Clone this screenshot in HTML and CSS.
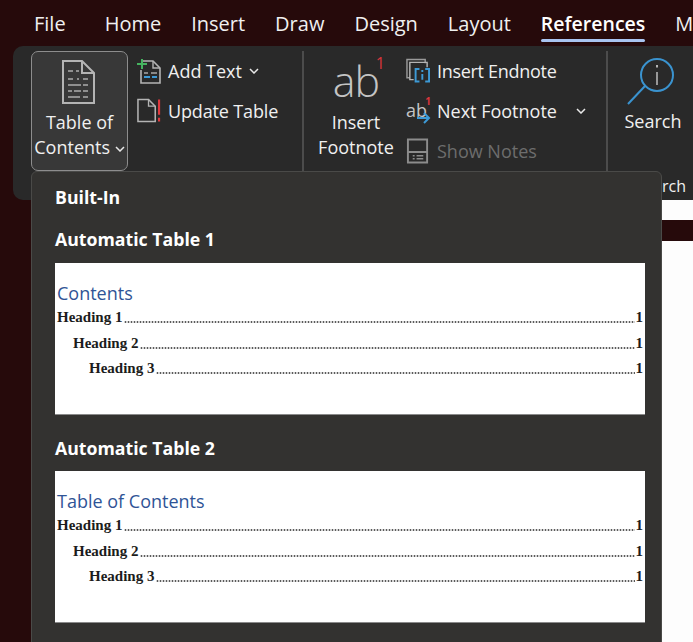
FILE: index.html
```html
<!DOCTYPE html>
<html lang="en">
<head>
  <meta charset="UTF-8">
  <meta name="viewport" content="width=device-width, initial-scale=1.0">
  <title>References ribbon</title>
  <link rel="stylesheet" href="styles.css">
</head>
<body>
  <nav class="tabs">
    <span class="tab tab-file">File</span>
    <span class="tab">Home</span>
    <span class="tab">Insert</span>
    <span class="tab">Draw</span>
    <span class="tab">Design</span>
    <span class="tab">Layout</span>
    <span class="tab tab-active">References</span>
    <span class="tab">M</span>
  </nav>

  <section class="ribbon">
    <div class="group group-toc">
      <button class="big-btn toc-btn">
        <svg class="toc-icon" width="34" height="46" viewBox="0 0 34 46" fill="none" stroke="#b4b4b4" stroke-width="2">
          <path d="M2 2H21L33 14V44H2Z"/>
          <path d="M21 2V14H33"/>
          <path d="M7 12h5M15 12h3M7 20h5M16 20h2M22 20h5M7 26h13M22 26h5M7 32h4M13 32h7M22 32h5M7 38h12M22 38h5" stroke-width="1.8" stroke="#8f8f8f"/>
        </svg>
        <span class="big-label">Table of<br>Contents <svg class="chev" width="10" height="6" viewBox="0 0 10 6" fill="none" stroke="#e8e8e8" stroke-width="1.5"><path d="M1 1l4 4 4-4"/></svg></span>
      </button>
      <div class="small-col">
        <div class="small-row">
          <svg class="small-icon" width="24" height="26" viewBox="0 0 24 26" fill="none">
            <path d="M6 3H16L23 10V25H4V12" stroke="#b4b4b4" stroke-width="1.6"/>
            <path d="M16 3V10H23" stroke="#b4b4b4" stroke-width="1.4"/>
            <path d="M5 1V11M0 6H10" stroke="#45b35f" stroke-width="2"/>
            <path d="M7 15h4M14 15h6" stroke="#a8a8a8" stroke-width="1.6"/>
            <path d="M7 19h6M15 19h5" stroke="#3d9ad6" stroke-width="2"/>
          </svg>
          <span>Add Text</span>
          <svg class="chev" width="10" height="6" viewBox="0 0 10 6" fill="none" stroke="#e8e8e8" stroke-width="1.5"><path d="M1 1l4 4 4-4"/></svg>
        </div>
        <div class="small-row">
          <svg class="small-icon" width="25" height="26" viewBox="0 0 25 26" fill="none">
            <path d="M1 1H12L19 8V24H1Z" stroke="#b4b4b4" stroke-width="1.6"/>
            <path d="M12 1V8H19" stroke="#b4b4b4" stroke-width="1.4"/>
            <path d="M23 1V17M23 20V24" stroke="#e0393e" stroke-width="2.2"/>
          </svg>
          <span class="tight">Update Table</span>
        </div>
      </div>
    </div>

    <div class="group group-notes">
      <div class="big-btn foot-btn">
        <div class="ab-glyph">ab<sup class="ab-one">1</sup></div>
        <span class="big-label">Insert<br>Footnote</span>
      </div>
      <div class="small-col small-col-notes">
        <div class="small-row">
          <svg class="small-icon" width="25" height="26" viewBox="0 0 25 26" fill="none">
            <path d="M4 20H1V1H20V5" stroke="#9a9a9a" stroke-width="1.5"/>
            <path d="M8 22H4V4H22V9" stroke="#b4b4b4" stroke-width="1.5"/>
            <path d="M14 11H10V24H14M20 11H24V24H20" stroke="#3d9ad6" stroke-width="2"/>
            <path d="M17 12V14M17 16V22" stroke="#3d9ad6" stroke-width="2"/>
          </svg>
          <span class="tighter">Insert Endnote</span>
        </div>
        <div class="small-row">
          <div class="small-icon next-icon">
            <span class="next-ab">ab</span><span class="next-one">1</span>
            <svg class="next-arrow" width="14" height="12" viewBox="0 0 14 12" fill="none" stroke="#3d9ad6" stroke-width="2"><path d="M0 6H12M7 1l5 5-5 5"/></svg>
          </div>
          <span>Next Footnote</span>
          <svg class="chev chev-next" width="10" height="6" viewBox="0 0 10 6" fill="none" stroke="#e8e8e8" stroke-width="1.5"><path d="M1 1l4 4 4-4"/></svg>
        </div>
        <div class="small-row row-disabled">
          <svg class="small-icon" width="25" height="26" viewBox="0 0 25 26" fill="none" stroke="#8c8c8c">
            <path d="M2 1H22V25H2Z" stroke-width="2"/>
            <path d="M2 14H22" stroke-width="2"/>
            <path d="M7 18h2M11 18h7M7 21h2M11 21h7" stroke-width="1.5"/>
          </svg>
          <span>Show Notes</span>
        </div>
      </div>
    </div>

    <div class="group group-search">
      <div class="big-btn search-btn">
        <svg class="search-icon" width="60" height="52" viewBox="0 0 60 52" fill="none">
          <circle cx="34" cy="20" r="16" stroke="#3a93cf" stroke-width="2"/>
          <path d="M22 31L5 49" stroke="#3a93cf" stroke-width="2"/>
          <path d="M34 17V30" stroke="#b4b4b4" stroke-width="1.6"/>
          <path d="M34 10V12.5" stroke="#b4b4b4" stroke-width="2"/>
        </svg>
        <span class="big-label">Search</span>
      </div>
      <div class="group-label">Research</div>
    </div>
  </section>

  <div class="doc-sheet doc-sheet-top"></div>
  <div class="doc-sheet doc-sheet-main"></div>

  <aside class="toc-menu">
    <h2 class="menu-head">Built-In</h2>

    <h3 class="menu-item-title">Automatic Table 1</h3>
    <div class="preview">
      <div class="preview-title">Contents</div>
      <div class="toc-line lvl1"><span>Heading 1</span><i class="leader"></i><span>1</span></div>
      <div class="toc-line lvl2"><span>Heading 2</span><i class="leader"></i><span>1</span></div>
      <div class="toc-line lvl3"><span>Heading 3</span><i class="leader"></i><span>1</span></div>
    </div>

    <h3 class="menu-item-title second">Automatic Table 2</h3>
    <div class="preview">
      <div class="preview-title">Table of Contents</div>
      <div class="toc-line lvl1"><span>Heading 1</span><i class="leader"></i><span>1</span></div>
      <div class="toc-line lvl2"><span>Heading 2</span><i class="leader"></i><span>1</span></div>
      <div class="toc-line lvl3"><span>Heading 3</span><i class="leader"></i><span>1</span></div>
    </div>
  </aside>
</body>
</html>
```

FILE: styles.css
```css
* {
  box-sizing: border-box;
}

html, body {
  height: 100%;
}

body {
  margin: 0;
  width: 693px;
  height: 642px;
  overflow: hidden;
  position: relative;
  background-color: #260a0b;
  color: #f0f0f0;
  font-family: "Open Sans", "Noto Sans", sans-serif;
  font-size: 18px;
}

.tabs {
  display: flex;
  gap: 30px;
  height: 46px;
  padding: 9px 0 0 34px;
  font-size: 20px;
  line-height: 30px;
  white-space: nowrap;
  overflow: hidden;
}

.tab-file {
  margin-right: 9px;
}

.tab-active {
  position: relative;
  font-size: 19.5px;
  font-weight: 600;
  color: #fff;
}

.tab-active::after {
  content: "";
  position: absolute;
  left: 0;
  right: 0;
  bottom: 4px;
  height: 3px;
  border-radius: 2px;
  background-color: #a9c4f0;
}

.ribbon {
  display: flex;
  height: 154px;
  margin-left: 13px;
  padding: 5px 0 0 18px;
  background-color: #292929;
  border-radius: 10px 0 0 10px;
  overflow: hidden;
}

.group {
  display: flex;
  position: relative;
  height: 120px;
  border-right: 2px solid #4c4c4c;
}

.group-toc {
  width: 273px;
}

.group-notes {
  width: 304px;
}

.group-search {
  border-right: none;
  flex: 1;
}

.group-label {
  position: absolute;
  right: 7px;
  top: 124px;
  font-size: 16px;
  line-height: 22px;
  white-space: nowrap;
}

.big-btn {
  display: flex;
  flex-direction: column;
  align-items: center;
  padding: 0;
  border: 1px solid transparent;
  border-radius: 7px;
  background: none;
  color: inherit;
  font: inherit;
  text-align: center;
}

.big-label {
  display: block;
  line-height: 25px;
}

.toc-btn {
  width: 97px;
  border-color: #8d8d8d;
  background-color: #383838;
}

.toc-btn .big-label {
  line-height: 24.5px;
}

.toc-icon {
  margin: 7px 0 5px -3px;
}

.foot-btn {
  width: 102px;
  padding-left: 2px;
}

.ab-glyph {
  position: relative;
  height: 57px;
  font-size: 43px;
  font-weight: 300;
  line-height: 57px;
  letter-spacing: -1px;
  color: #c4c4c4;
  margin-bottom: 1px;
}

.ab-one {
  position: absolute;
  left: 43px;
  top: -1px;
  font-size: 16px;
  font-weight: 400;
  line-height: 24px;
  color: #d8353c;
}

.small-col {
  display: flex;
  flex-direction: column;
  padding-left: 9px;
}

.small-col-notes {
  padding-left: 0;
}

.small-row {
  display: flex;
  align-items: center;
  gap: 7px;
  height: 40px;
  white-space: nowrap;
}

.small-icon {
  flex: none;
  width: 24px;
}

.tight {
  letter-spacing: -0.15px;
}

.tighter {
  letter-spacing: -0.3px;
}

.row-disabled {
  color: #6d6d6d;
}

.chev {
  vertical-align: 2px;
}

.chev-next {
  margin-left: 12px;
}

.next-icon {
  position: relative;
  height: 26px;
}

.next-ab {
  position: absolute;
  left: 0;
  top: -1px;
  font-size: 18px;
  line-height: 26px;
  color: #c4c4c4;
}

.next-one {
  position: absolute;
  right: -1px;
  top: -3px;
  font-size: 10px;
  line-height: 12px;
  font-weight: 700;
  color: #d8353c;
}

.next-arrow {
  position: absolute;
  right: -1px;
  bottom: 0;
}

.search-btn {
  width: 60px;
  margin-left: 15px;
}

.search-icon {
  margin: 3px 0 2px;
}

.doc-sheet {
  margin-left: 100px;
  background-color: #fdfdfd;
}

.doc-sheet-top {
  height: 20px;
  margin-bottom: 21px;
}

.doc-sheet-main {
  height: 401px;
}

/* dropdown lies over the ribbon and the page */
.toc-menu {
  position: absolute;
  left: 31px;
  top: 171px;
  width: 631px;
  height: 480px;
  padding: 13px 16px 0 23px;
  background-color: #333230;
  border: 1px solid #4a4a48;
  border-radius: 6px 6px 0 0;
  z-index: 2;
}

.menu-head,
.menu-item-title {
  margin: 0;
  font-size: 17.7px;
  font-weight: 700;
  color: #fff;
  line-height: 24px;
}

.menu-item-title {
  margin-top: 18px;
  margin-bottom: 12px;
}

.menu-item-title.second {
  margin-top: 21px;
  margin-bottom: 11px;
}

.preview {
  height: 152px;
  padding: 18px 2px 0;
  background-color: #fff;
  border-bottom: 1px solid #8a8a8a;
  color: #1c1c1c;
  font-family: "Liberation Serif", serif;
}

.preview-title {
  font-family: "Open Sans", sans-serif;
  font-size: 18px;
  line-height: 24px;
  color: #2f5496;
}

.toc-line {
  display: flex;
  align-items: baseline;
  height: 25.5px;
  line-height: 25px;
  font-size: 15px;
  font-weight: 700;
}

.leader {
  flex: 1;
  height: 2px;
  margin: 0 1px 0 2px;
  transform: translateY(1px);
  background-image: radial-gradient(circle, #5c5c5c 0.9px, transparent 1.2px);
  background-size: 3px 2px;
}

.lvl2 {
  padding-left: 16px;
}

.lvl3 {
  padding-left: 32px;
}
```
